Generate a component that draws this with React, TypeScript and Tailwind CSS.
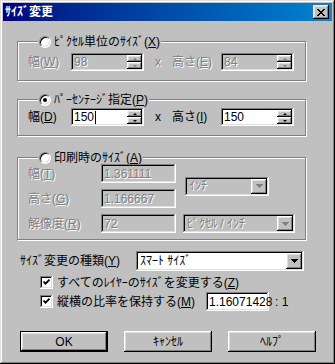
import type { ReactNode } from "react";

const raised =
  "shadow-[inset_-1px_-1px_#000,inset_1px_1px_#fff,inset_-2px_-2px_#808080,inset_2px_2px_#dfdfdf]";
const sunken =
  "shadow-[inset_-1px_-1px_#fff,inset_1px_1px_#808080,inset_-2px_-2px_#dfdfdf,inset_2px_2px_#000]";
const dim = "text-[#808080] [text-shadow:1px_1px_0_#fff]";

const Key = ({ k }: { k: string }) => <u className="underline-offset-[1px]">{k}</u>;

const Radio = ({ checked }: { checked?: boolean }) => (
  <span className="flex w-[12px] h-[12px] shrink-0 items-center justify-center rounded-full bg-white border border-t-[#808080] border-l-[#808080] border-r-white border-b-white shadow-[inset_1px_1px_#000,inset_-1px_-1px_#dfdfdf]">
    {checked && <span className="w-[4px] h-[4px] rounded-full bg-black" />}
  </span>
);

const Check = () => (
  <span className={`flex w-[13px] h-[13px] shrink-0 items-center justify-center bg-white ${sunken}`}>
    <svg width="7" height="7" viewBox="0 0 7 7">
      <path d="M0.5 2.5 L2.5 4.7 L6.5 0.7" fill="none" stroke="#000" strokeWidth="1.8" />
    </svg>
  </span>
);

const Arrow = ({ up, off }: { up?: boolean; off?: boolean }) => (
  <span
    className={`w-0 h-0 border-l-[2px] border-r-[2px] border-l-transparent border-r-transparent ${
      up ? "border-b-[2px]" : "border-t-[2px]"
    } ${off ? "border-b-[#808080] border-t-[#808080]" : "border-b-black border-t-black"}`}
  />
);

const Spin = ({ off }: { off?: boolean }) => (
  <div className="flex flex-col w-[15px] h-full">
    <div className={`flex flex-1 items-center justify-center bg-[#c0c0c0] ${raised}`}>
      <Arrow up off={off} />
    </div>
    <div className={`flex flex-1 items-center justify-center bg-[#c0c0c0] ${raised}`}>
      <Arrow off={off} />
    </div>
  </div>
);

type FieldProps = {
  value: string;
  w: string;
  h?: string;
  off?: boolean;
  spin?: boolean;
  caret?: boolean;
};

const Field = ({ value, w, h = "h-[18px]", off, spin, caret }: FieldProps) => (
  <div className={`flex items-stretch p-[2px] ${w} ${h} ${off ? "bg-[#c0c0c0]" : "bg-white"} ${sunken}`}>
    <span className={`flex flex-1 items-center pl-[1px] text-[12px] ${off ? dim : "text-black"}`}>
      {value}
      {caret && <span className="ml-[1px] w-[1px] h-[13px] bg-black" />}
    </span>
    {spin && <Spin off={off} />}
  </div>
);

const DropTri = ({ off }: { off?: boolean }) => (
  <svg width="7" height="4" viewBox="0 0 7 4" shapeRendering="crispEdges">
    <path d="M0 0h7v1h-1v1h-1v1h-1v1h-1v-1h-1v-1h-1v-1h-1z" fill={off ? "#808080" : "#000"} />
  </svg>
);

const Combo = ({ value, w, h = "h-[19px]", off }: { value: string; w: string; h?: string; off?: boolean }) => (
  <div className={`flex items-stretch p-[2px] ${w} ${h} ${off ? "bg-[#c0c0c0]" : "bg-white"} ${sunken}`}>
    <span className={`flex flex-1 items-center pl-[2px] text-[12px] ${off ? dim : "text-black"}`}>{value}</span>
    <div className={`flex w-[16px] items-center justify-center bg-[#c0c0c0] ${raised}`}>
      <DropTri off={off} />
    </div>
  </div>
);

const Group = ({ legend, checked, className, children }: { legend: ReactNode; checked?: boolean; className: string; children: ReactNode }) => (
  <fieldset className={`w-[289px] px-[10px] border border-[#808080] shadow-[inset_1px_1px_#fff,1px_1px_#fff] ${className}`}>
    <legend className="ml-[10px] flex h-[13px] items-center gap-[3px] bg-[#c0c0c0] px-[1px] text-[12px] text-black">
      <Radio checked={checked} />
      <span>{legend}</span>
    </legend>
    {children}
  </fieldset>
);

const Button = ({ label, primary }: { label: string; primary?: boolean }) => (
  <button
    className={`flex w-[88px] h-[21px] items-center justify-center bg-[#c0c0c0] text-[12px] text-black ${
      primary ? "border border-black" : ""
    } ${raised}`}
  >
    {label}
  </button>
);

export default function App() {
  return (
    <div className="w-[335px] h-[364px] p-[3px] bg-[#c0c0c0] font-['Liberation_Sans','Noto_Sans_CJK_JP',sans-serif] shadow-[inset_-1px_-1px_#000,inset_1px_1px_#dfdfdf,inset_-2px_-2px_#808080,inset_2px_2px_#fff] flex flex-col">
      {/* title bar */}
      <div className="flex h-[18px] items-center justify-between bg-gradient-to-r from-[#000080] to-[#1084d0] pl-[2px] pr-[3px]">
        <span className="text-[12px] font-bold text-white">ｻｲｽﾞ変更</span>
        <button className={`flex w-[16px] h-[14px] items-center justify-center bg-[#c0c0c0] ${raised}`}>
          <svg width="8" height="7" viewBox="0 0 8 7" shapeRendering="crispEdges">
            <path
              d="M0 0h2v1h1v1h2v-1h1v-1h2v1h-1v1h-1v1h-1v1h1v1h1v1h1v1h-2v-1h-1v-1h-2v1h-1v1h-2v-1h1v-1h1v-1h1v-1h-1v-1h-1v-1h-1z"
              fill="#000"
            />
          </svg>
        </button>
      </div>

      <div className="flex flex-col pl-[14px]">
        <Group
          className="mt-[14px] pt-[5px] pb-[9px]"
          legend={<>ﾋﾟｸｾﾙ単位のｻｲｽﾞ(<Key k="X" />)</>}
        >
          <div className="flex items-center text-[12px]">
            <span className={`w-[43px] ${dim}`}>幅(<Key k="W" />)</span>
            <Field value="98" w="w-[73px]" off spin />
            <span className={`w-[28px] text-center ${dim}`}>x</span>
            <span className={`w-[49px] ${dim}`}>高さ(<Key k="E" />)</span>
            <Field value="84" w="w-[73px]" off spin />
          </div>
        </Group>

        <Group
          className="mt-[12px] pt-[2px] pb-[9px]"
          checked
          legend={<>ﾊﾟｰｾﾝﾃｰｼﾞ指定(<Key k="P" />)</>}
        >
          <div className="flex items-center text-[12px] text-black">
            <span className="w-[43px]">幅(<Key k="D" />)</span>
            <Field value="150" w="w-[73px]" spin caret />
            <span className="w-[28px] text-center">x</span>
            <span className="w-[49px]">高さ(<Key k="I" />)</span>
            <Field value="150" w="w-[73px]" spin />
          </div>
        </Group>

        <Group
          className="mt-[15px] pt-0 pb-[6px]"
          legend={<>印刷時のｻｲｽﾞ(<Key k="A" />)</>}
        >
          <div className="grid grid-cols-[73px_75px_1fr] grid-rows-[19px_19px_19px] gap-y-[6px] text-[12px]">
            <span className={`self-center ${dim}`}>幅(<Key k="T" />)</span>
            <Field value="1.361111" w="w-[75px]" h="h-[19px]" off />
            <div className="row-span-2 self-center ml-[9px]">
              <Combo value="ｲﾝﾁ" w="w-[84px]" off />
            </div>
            <span className={`self-center ${dim}`}>高さ(<Key k="G" />)</span>
            <Field value="1.166667" w="w-[75px]" h="h-[19px]" off />
            <span className={`self-center ${dim}`}>解像度(<Key k="R" />)</span>
            <Field value="72" w="w-[75px]" h="h-[19px]" off />
            <div className="ml-[7px]">
              <Combo value="ﾋﾟｸｾﾙ / ｲﾝﾁ" w="w-[112px]" off />
            </div>
          </div>
        </Group>

        <div className="mt-[11px] flex items-center text-[12px] text-black">
          <span className="ml-[3px] w-[116px]">ｻｲｽﾞ変更の種類(<Key k="Y" />)</span>
          <Combo value="ｽﾏｰﾄ ｻｲｽﾞ" w="w-[168px]" h="h-[20px]" />
        </div>

        <div className="mt-[5px] ml-[23px] flex h-[13px] items-center gap-[4px] text-[12px] text-black">
          <Check />
          <span>すべてのﾚｲﾔｰのｻｲｽﾞを変更する(<Key k="Z" />)</span>
        </div>

        <div className="mt-[3px] ml-[23px] flex h-[19px] items-center text-[12px] text-black">
          <Check />
          <span className="ml-[4px] w-[149px]">縦横の比率を保持する(<Key k="M" />)</span>
          <Field value="1.16071428" w="w-[63px]" h="h-[19px]" />
          <span className="ml-[6px]">: 1</span>
        </div>

        <div className="mt-[20px] ml-[3px] flex gap-[16px]">
          <Button label="OK" primary />
          <Button label="ｷｬﾝｾﾙ" />
          <Button label="ﾍﾙﾌﾟ" />
        </div>
      </div>
    </div>
  );
}
